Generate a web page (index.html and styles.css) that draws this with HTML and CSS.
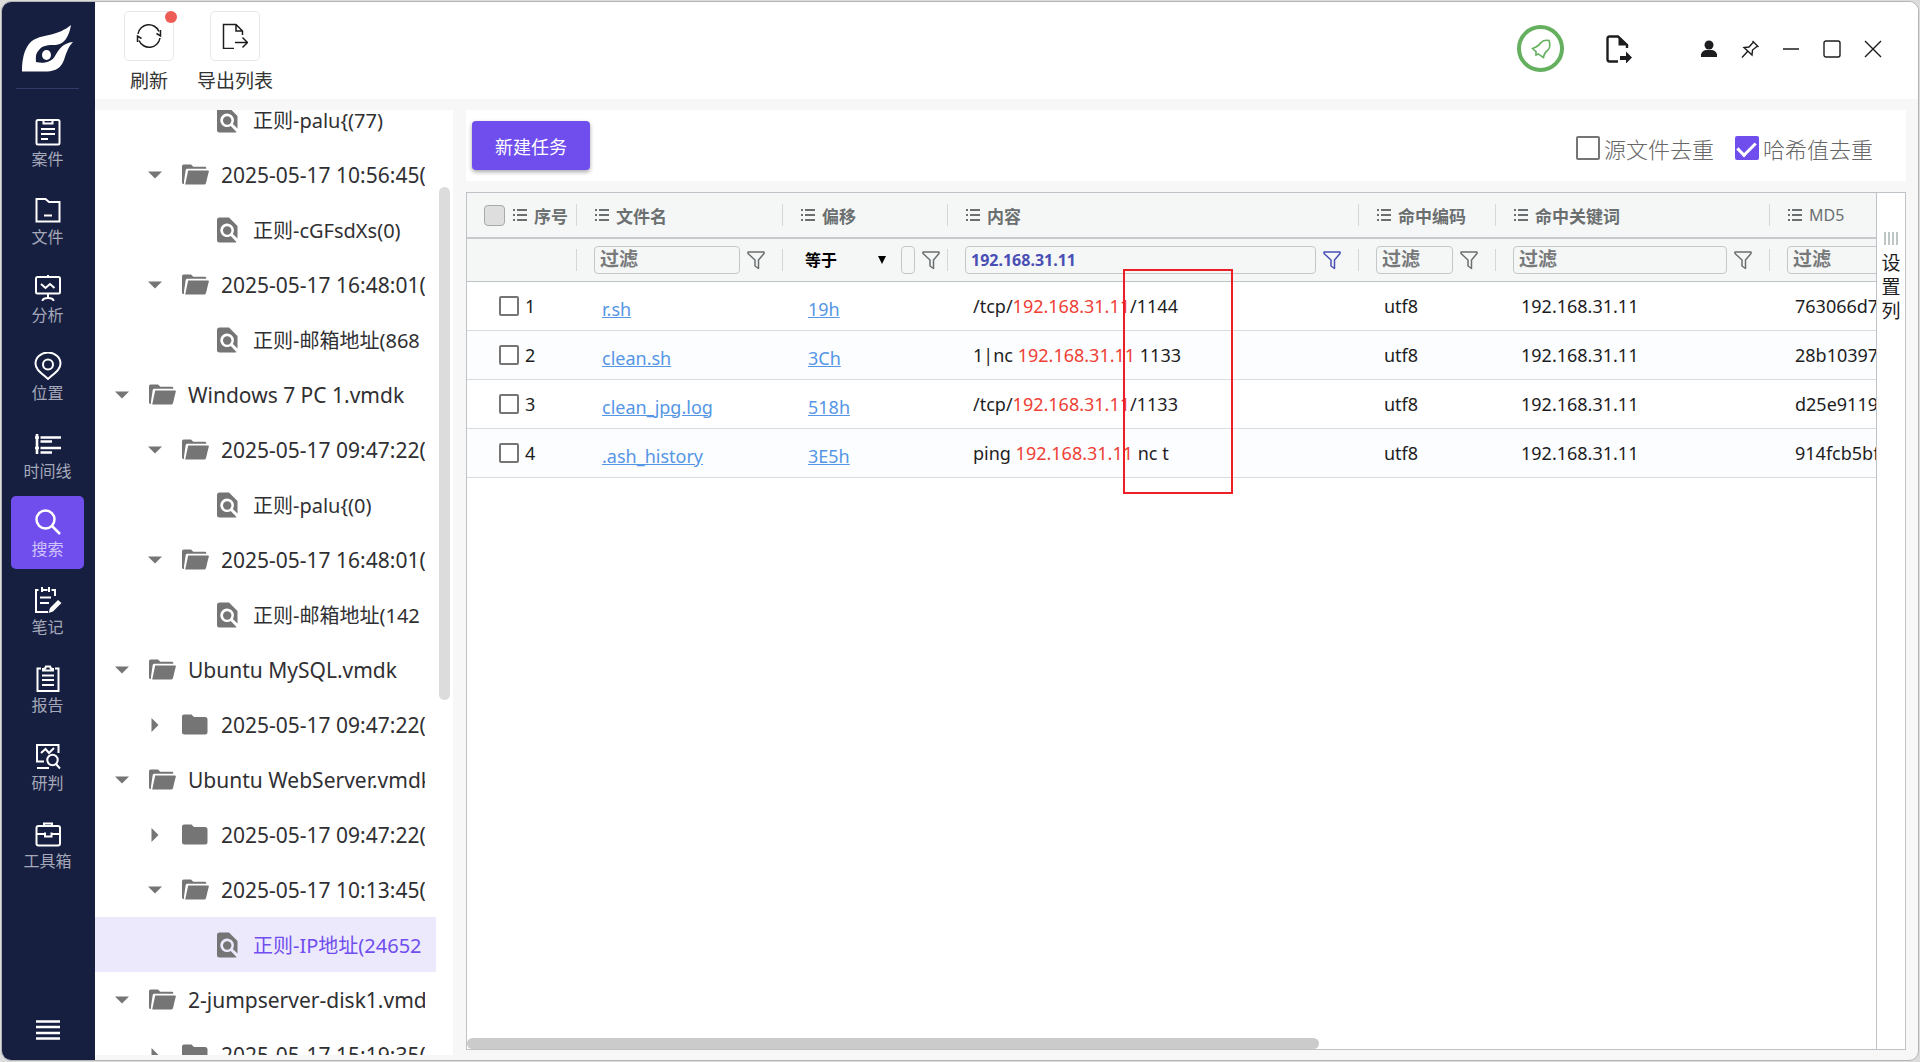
FILE: index.html
```html
<!DOCTYPE html>
<html lang="zh-CN">
<head>
  <meta charset="UTF-8" />
  <title>搜索</title>
  <link rel="stylesheet" href="styles.css">
</head>
<body>

  <!-- iconos compartidos -->
  <svg class="sprite" aria-hidden="true">
    <symbol id="i-open" viewBox="0 0 27 21">
      <path d="M0 2.2Q0 .5 1.7.5H9l2.3 2.3H23q1.3 0 1.3 1.4v.6H5.2Q4 4.800 3.700 6L2 17.500V20Q0 20 0 18.500z"/>
      <path d="M6.200 6.500H26q1 0 .8 1L24 19q-.4 1.500-2 1.500H3.200z"/>
    </symbol>
    <symbol id="i-folder" viewBox="0 0 27 21">
      <path d="M0 2.500Q0 .5 2 .5h7.500L12 3h11q2.500 0 2.500 2.500V18q0 2.500-2.500 2.500H2.500Q0 20.500 0 18z"/>
    </symbol>
    <symbol id="i-find" viewBox="0 0 21 26">
      <path d="M2.500.5H12L20.500 9v12.500l-4.600-4.600a6.800 6.800 0 1 0-2.200 2.200l5.800 5.800q-.6.600-1.500.6H2.500Q0 25.500 0 23V3Q0 .5 2.500.5z"/>
      <circle cx="10.200" cy="13.500" r="4.200"/>
    </symbol>
    <symbol id="i-down" viewBox="0 0 14 14"><path d="M0 3.500h14L7 10.500z"/></symbol>
    <symbol id="i-right" viewBox="0 0 14 14"><path d="M3.500 0v14L10.500 7z"/></symbol>
    <symbol id="i-list" viewBox="0 0 14 12">
      <path d="M0 1h2M4 1h10M0 6h2M4 6h10M0 11h2M4 11h10" stroke="currentColor" stroke-width="1.800"/>
    </symbol>
    <symbol id="i-funnel" viewBox="0 0 18 20">
      <path d="M1 2h16v1.500L11.500 10v8.500L8 16v-6L1 3.500z" fill="none" stroke="currentColor" stroke-width="1.500" stroke-linejoin="round"/>
    </symbol>
  </svg>

  <div class="window">
    <nav class="sidebar">
      <svg class="logo" viewBox="0 0 52 47">
        <path fill="#fff" fill-rule="evenodd" d="M49 0C47 12 42 19 34 20C26 20 21 20 17 25C13 29 14 33 14 37C22 39 30 37 33 31C37 24 41 18 51 17C46 22 44 29 42 35C39 43 34 46 25 46.500H0C0 38 1 29 5 22C10 13 18 12 27 10C36 8 43 5 49 0z"/>
        <ellipse fill="#fff" cx="24.500" cy="30" rx="4.500" ry="5"/>
      </svg>
      <ul class="menu">
        <li><a href="#">
          <svg viewBox="0 0 28 28"><rect x="2.500" y="2" width="23" height="24.500" rx="1.500"/><path d="M9.500 2v3.500h9V2M7 11h14M7 16h14M7 21h7"/></svg>案件</a></li>
        <li><a href="#">
          <svg viewBox="0 0 28 28"><path d="M2.500 3h9l3.500 3h10.500v19.500h-23zM10 19.500h8"/></svg>文件</a></li>
        <li><a href="#">
          <svg viewBox="0 0 28 28"><rect x="2" y="3" width="24" height="16.500" rx="1.500"/><path d="M14 1v2M7 10l4.500 4 4.500-4 4.500 4M14 20v4M8.500 27q0-3 5.500-3t5.500 3"/></svg>分析</a></li>
        <li><a href="#">
          <svg viewBox="0 0 28 28"><path d="M14 27C6 20 1.500 17 1.500 11.500a12.500 11 0 0 1 25 0C26.500 17 22 20 14 27z"/><circle cx="14" cy="12.500" r="5"/></svg>位置</a></li>
        <li><a href="#">
          <svg viewBox="0 0 28 28"><path d="M3 4v20M1 7.500h4M1 18h4M6.500 7.500H27M6.500 11.500H18M6.500 18H27M6.500 22.500H18" stroke-width="2.600"/></svg>时间线</a></li>
        <li><a href="#" class="active">
          <svg viewBox="0 0 28 28"><circle cx="11.500" cy="11.500" r="9" stroke-width="2.500"/><path d="M18 18l8 8" stroke-width="2.500"/></svg>搜索</a></li>
        <li><a href="#">
          <svg viewBox="0 0 28 28"><path d="M4.500 4H2v22h12M17.500 4H21v6M8 1v5M15 1v5M8.500 4h5M6 11.500h11M6 17h9"/><path d="M14.500 27l1.500-5 8-8 3.500 3-8.500 8.500z" fill="#fff" stroke="none"/></svg>笔记</a></li>
        <li><a href="#">
          <svg viewBox="0 0 28 28"><path d="M7 4.500H3.500V27h21V4.500H21M9 6.500h10V5q-2.500 0-3-2.500h-4Q11.500 5 9 5zM8 11.500h12M8 16h12M8 21h12"/></svg>报告</a></li>
        <li><a href="#">
          <svg viewBox="0 0 28 28"><path d="M10 19.500H3V3h21.500v8M3 26h12M7 11l4.500-4 3.500 4 5-5"/><circle cx="18.500" cy="18" r="5.200"/><path d="M22 22l4 4.500"/></svg>研判</a></li>
        <li><a href="#">
          <svg viewBox="0 0 28 28"><rect x="2.500" y="6" width="23.500" height="19.500" rx="2"/><path d="M10 6V3.500h8V6M2.500 14H11M17.500 14H26M11 12.500v4h6.500v-4"/></svg>工具箱</a></li>
      </ul>
      <button class="collapse" aria-label="菜单"><svg viewBox="0 0 24 20"><path d="M0 1.500h24M0 7h24M0 13h24M0 18.500h24"/></svg></button>
    </nav>

    <div class="main">
      <header class="topbar">
        <button class="tool">
          <span class="tool-icon">
            <svg viewBox="0 0 26 26"><path d="M2 11A11 11 0 0 1 23 8.500M24 15A11 11 0 0 1 3 17.500M24.500 7v6l-4-2.500M1.500 19v-6l4 2.500"/></svg>
            <i class="dot"></i>
          </span>刷新
        </button>
        <button class="tool">
          <span class="tool-icon">
            <svg viewBox="0 0 26 26"><path d="M12 25.500H1.500V1.500H14L20.500 8v4M14 1.500V8h6.500M13 19.500h12M20.500 14.500l5 5-5 5"/></svg>
          </span>导出列表
        </button>

        <div class="window-tools">
          <button class="bell" aria-label="通知"><svg viewBox="0 0 20 20"><path d="M1.500 9.500Q8 7 10 3.500Q13 .5 18 1.500Q20 8 17 11Q13 14 12.500 18.500Q10 17 7.500 15L5 16V12.500Q3.500 11.500 1.500 9.500z"/></svg></button>
          <button class="exit" aria-label="导出"><svg viewBox="0 0 26 28"><path d="M12 26.500H3.500q-2 0-2-2v-21q0-2 2-2H12L21 10v3" fill="none" stroke="#1d1d1f" stroke-width="2.400"/><path d="M12.500 1l10 9.500h-10zM14 21h6v-4.500l6 6-6 6V25h-6z"/></svg></button>
          <button aria-label="用户"><svg viewBox="0 0 18 18"><circle cx="9" cy="5" r="4.500"/><path d="M1 17v-2.500q1-4 5-4.500h6q4 .5 5 4.500V17z"/></svg></button>
          <button aria-label="置顶"><svg class="line" viewBox="0 0 18 18"><path d="M11.500 1l6 6M12.500 2L8 7 3 7.500l8 7.500.5-5L16.500 6M7 11l-6 6.500"/></svg></button>
          <button aria-label="最小化"><svg class="line" viewBox="0 0 18 18"><path d="M1 9h16"/></svg></button>
          <button aria-label="最大化"><svg class="line" viewBox="0 0 18 18"><rect x="1" y="1" width="16" height="16" rx="2"/></svg></button>
          <button aria-label="关闭"><svg class="line" viewBox="0 0 18 18"><path d="M1 1l16 16M17 1L1 17"/></svg></button>
        </div>
      </header>

      <div class="content">
        <aside class="tree-panel">
          <ul class="tree">
            <li class="leaf"><svg class="node"><use href="#i-find"/></svg><span>正则-palu{(77)</span></li>
            <li class="sub"><svg class="arrow"><use href="#i-down"/></svg><svg class="node"><use href="#i-open"/></svg><span>2025-05-17 10:56:45(</span></li>
            <li class="leaf"><svg class="node"><use href="#i-find"/></svg><span>正则-cGFsdXs(0)</span></li>
            <li class="sub"><svg class="arrow"><use href="#i-down"/></svg><svg class="node"><use href="#i-open"/></svg><span>2025-05-17 16:48:01(</span></li>
            <li class="leaf"><svg class="node"><use href="#i-find"/></svg><span>正则-邮箱地址(868</span></li>
            <li><svg class="arrow"><use href="#i-down"/></svg><svg class="node"><use href="#i-open"/></svg><span>Windows 7 PC 1.vmdk</span></li>
            <li class="sub"><svg class="arrow"><use href="#i-down"/></svg><svg class="node"><use href="#i-open"/></svg><span>2025-05-17 09:47:22(</span></li>
            <li class="leaf"><svg class="node"><use href="#i-find"/></svg><span>正则-palu{(0)</span></li>
            <li class="sub"><svg class="arrow"><use href="#i-down"/></svg><svg class="node"><use href="#i-open"/></svg><span>2025-05-17 16:48:01(</span></li>
            <li class="leaf"><svg class="node"><use href="#i-find"/></svg><span>正则-邮箱地址(142</span></li>
            <li><svg class="arrow"><use href="#i-down"/></svg><svg class="node"><use href="#i-open"/></svg><span>Ubuntu MySQL.vmdk</span></li>
            <li class="sub"><svg class="arrow"><use href="#i-right"/></svg><svg class="node"><use href="#i-folder"/></svg><span>2025-05-17 09:47:22(</span></li>
            <li><svg class="arrow"><use href="#i-down"/></svg><svg class="node"><use href="#i-open"/></svg><span>Ubuntu WebServer.vmdk</span></li>
            <li class="sub"><svg class="arrow"><use href="#i-right"/></svg><svg class="node"><use href="#i-folder"/></svg><span>2025-05-17 09:47:22(</span></li>
            <li class="sub"><svg class="arrow"><use href="#i-down"/></svg><svg class="node"><use href="#i-open"/></svg><span>2025-05-17 10:13:45(</span></li>
            <li class="leaf selected"><svg class="node"><use href="#i-find"/></svg><span>正则-IP地址(24652</span></li>
            <li><svg class="arrow"><use href="#i-down"/></svg><svg class="node"><use href="#i-open"/></svg><span>2-jumpserver-disk1.vmd</span></li>
            <li class="sub"><svg class="arrow"><use href="#i-right"/></svg><svg class="node"><use href="#i-folder"/></svg><span>2025-05-17 15:19:35(</span></li>
          </ul>
          <div class="scroll-y"></div>
        </aside>

        <section class="results">
          <div class="actions">
            <button class="primary">新建任务</button>
            <div class="options">
              <label><input type="checkbox">源文件去重</label>
              <label><input type="checkbox" checked>哈希值去重</label>
            </div>
          </div>

          <div class="grid">
            <div class="grid-body">
              <table>
                <colgroup>
                  <col class="c-num"><col class="c-name"><col class="c-offset"><col class="c-content"><col class="c-enc"><col class="c-key"><col class="c-md5">
                </colgroup>
                <thead>
                  <tr class="titles">
                    <th><div class="cell"><input type="checkbox" class="all" aria-label="全选"><svg class="list"><use href="#i-list"/></svg>序号</div></th>
                    <th><div class="cell"><svg class="list"><use href="#i-list"/></svg>文件名</div></th>
                    <th><div class="cell"><svg class="list"><use href="#i-list"/></svg>偏移</div></th>
                    <th><div class="cell"><svg class="list"><use href="#i-list"/></svg>内容</div></th>
                    <th><div class="cell"><svg class="list"><use href="#i-list"/></svg>命中编码</div></th>
                    <th><div class="cell"><svg class="list"><use href="#i-list"/></svg>命中关键词</div></th>
                    <th><div class="cell md5"><svg class="list"><use href="#i-list"/></svg>MD5</div></th>
                  </tr>
                  <tr class="filters">
                    <td><div class="cell"></div></td>
                    <td><div class="cell"><input type="text" placeholder="过滤" aria-label="文件名"><svg class="funnel"><use href="#i-funnel"/></svg></div></td>
                    <td><div class="cell narrow"><span class="operator"><select aria-label="偏移条件"><option>等于</option></select><i></i></span><input type="text" class="tiny" aria-label="偏移"><svg class="funnel"><use href="#i-funnel"/></svg></div></td>
                    <td><div class="cell on"><input type="text" value="192.168.31.11" aria-label="内容"><svg class="funnel"><use href="#i-funnel"/></svg></div></td>
                    <td><div class="cell"><input type="text" placeholder="过滤" aria-label="命中编码"><svg class="funnel"><use href="#i-funnel"/></svg></div></td>
                    <td><div class="cell"><input type="text" placeholder="过滤" aria-label="命中关键词"><svg class="funnel"><use href="#i-funnel"/></svg></div></td>
                    <td><div class="cell"><input type="text" placeholder="过滤" aria-label="MD5"><svg class="funnel"><use href="#i-funnel"/></svg></div></td>
                  </tr>
                </thead>
                <tbody>
                  <tr>
                    <td><label class="pick"><input type="checkbox">1</label></td>
                    <td><a href="#">r.sh</a></td>
                    <td><a href="#">19h</a></td>
                    <td>/tcp/<em>192.168.31.11</em>/1144</td>
                    <td>utf8</td>
                    <td>192.168.31.11</td>
                    <td>763066d7</td>
                  </tr>
                  <tr>
                    <td><label class="pick"><input type="checkbox">2</label></td>
                    <td><a href="#">clean.sh</a></td>
                    <td><a href="#">3Ch</a></td>
                    <td>1|nc <em>192.168.31.11</em> 1133</td>
                    <td>utf8</td>
                    <td>192.168.31.11</td>
                    <td>28b10397</td>
                  </tr>
                  <tr>
                    <td><label class="pick"><input type="checkbox">3</label></td>
                    <td><a href="#">clean_jpg.log</a></td>
                    <td><a href="#">518h</a></td>
                    <td>/tcp/<em>192.168.31.11</em>/1133</td>
                    <td>utf8</td>
                    <td>192.168.31.11</td>
                    <td>d25e9119</td>
                  </tr>
                  <tr>
                    <td><label class="pick"><input type="checkbox">4</label></td>
                    <td><a href="#">.ash_history</a></td>
                    <td><a href="#">3E5h</a></td>
                    <td>ping <em>192.168.31.11</em> nc t</td>
                    <td>utf8</td>
                    <td>192.168.31.11</td>
                    <td>914fcb5bf</td>
                  </tr>
                </tbody>
              </table>
              <div class="scroll-x"></div>
            </div>
            <button class="columns"><svg viewBox="0 0 14 13"><path d="M1 0v13M5 0v13M9 0v13M13 0v13"/></svg><span>设置列</span></button>
            <div class="mark"></div>
          </div>
        </section>
      </div>
    </div>
  </div>

</body>
</html>
```
FILE: styles.css
```css
* {
  box-sizing: border-box;
}

body {
  margin: 0;
  padding: 1px;
  height: 100vh;
  background: #dcdcdc;
  font-family: "Noto Sans", "Noto Sans CJK SC", sans-serif;
  font-size: 18px;
  color: #1d1d1f;
  overflow: hidden;
}

button, input, select {
  font-family: inherit;
  margin: 0;
}

button {
  border: none;
  background: none;
  padding: 0;
  color: inherit;
}

ul {
  list-style: none;
  margin: 0;
  padding: 0;
}

svg {
  display: block;
  flex: none;
}

.sprite {
  position: absolute;
  width: 0;
  height: 0;
}

.window {
  display: flex;
  height: 100%;
  border: 1px solid #b4b4b6;
  border-radius: 10px;
  background: #f7f7f7;
  overflow: hidden;
}

/* barra lateral */
.sidebar {
  width: 93px;
  flex: none;
  display: flex;
  flex-direction: column;
  align-items: center;
  padding: 23px 11px 20px 9px;
  background: #171f41;
}

.logo {
  width: 52px;
  height: 47px;
}

.menu {
  width: 100%;
  display: flex;
  flex-direction: column;
  align-items: center;
  gap: 5px;
  margin-top: 16px;
  padding-top: 18px;
  position: relative;
}

.menu::before {
  content: "";
  position: absolute;
  top: 0;
  left: 5px;
  right: 5px;
  height: 1px;
  background: #333a68;
}

.menu a {
  width: 73px;
  height: 73px;
  display: flex;
  flex-direction: column;
  align-items: center;
  justify-content: center;
  gap: 1px;
  padding-top: 3px;
  border-radius: 5px;
  font-size: 16px;
  line-height: 24px;
  color: #a4a8b8;
  text-decoration: none;
}

.menu a.active {
  background: #704eee;
  color: #d0c5fa;
}

.menu svg {
  width: 28px;
  height: 28px;
  fill: none;
  stroke: #fff;
  stroke-width: 2;
}

.collapse {
  margin-top: auto;
}

.collapse svg {
  width: 24px;
  height: 20px;
  stroke: #fff;
  stroke-width: 2.5;
}

.main {
  flex: 1;
  min-width: 0;
  display: flex;
  flex-direction: column;
}

/* barra superior */
.topbar {
  display: flex;
  align-items: flex-start;
  height: 97px;
  flex: none;
  padding: 9px 33px 0 11px;
  background: #fff;
}

.tool {
  width: 86px;
  display: flex;
  flex-direction: column;
  align-items: center;
  gap: 5px;
  font-size: 19px;
  line-height: 30px;
  color: #333;
  white-space: nowrap;
}

.tool-icon {
  position: relative;
  width: 50px;
  height: 50px;
  display: flex;
  align-items: center;
  justify-content: center;
  border: 1px solid #e6e6e6;
  border-radius: 5px;
}

.tool-icon svg {
  width: 26px;
  height: 26px;
  fill: none;
  stroke: #1d1d1f;
  stroke-width: 1.5;
}

.dot {
  position: absolute;
  top: -1px;
  right: -4px;
  width: 12px;
  height: 12px;
  border-radius: 50%;
  background: #ee5c56;
}

.window-tools {
  margin-left: auto;
  display: flex;
  align-items: center;
  gap: 17px;
  height: 75px;
}

.window-tools button {
  width: 24px;
  height: 24px;
  display: flex;
  align-items: center;
  justify-content: center;
}

.window-tools svg {
  width: 18px;
  height: 18px;
  fill: #1d1d1f;
}

.window-tools .line {
  fill: none;
  stroke: #1d1d1f;
  stroke-width: 1.4;
}

.window-tools .bell {
  width: 47px;
  height: 47px;
  margin-right: 25px;
  border: 4px solid #65b05f;
  border-radius: 50%;
}

.window-tools .bell svg {
  width: 20px;
  height: 20px;
  fill: none;
  stroke: #65b05f;
  stroke-width: 1.6;
}

.window-tools .exit {
  width: 26px;
  margin-right: 48px;
}

.window-tools .exit svg {
  width: 26px;
  height: 28px;
}

.content {
  flex: 1;
  min-height: 0;
  display: flex;
  gap: 13px;
  padding: 11px 12px 5px 0;
}

/* arbol */
.tree-panel {
  position: relative;
  width: 358px;
  flex: none;
  background: #fff;
  overflow: hidden;
}

.tree {
  margin: -18px 17px 0 0;
}

.tree li {
  display: flex;
  align-items: center;
  height: 55px;
  padding: 0 11px 0 20px;
  font-size: 21px;
  color: #303033;
}

.tree li.sub {
  padding-left: 53px;
}

.tree li.leaf {
  padding-left: 119px;
  font-size: 20px;
}

.tree li.selected {
  background: #ece9fd;
  color: #704eee;
}

.tree span {
  flex: 1;
  min-width: 0;
  white-space: nowrap;
  overflow: hidden;
}

.arrow {
  width: 14px;
  height: 14px;
  margin-right: 20px;
  fill: #757575;
}

.node {
  width: 27px;
  height: 21px;
  margin-right: 12px;
  fill: #757575;
}

.leaf .node {
  height: 26px;
}

.scroll-y {
  position: absolute;
  top: 77px;
  right: 3px;
  width: 11px;
  height: 513px;
  border-radius: 6px;
  background: #dcdcdc;
}

/* resultados */
.results {
  flex: 1;
  min-width: 0;
  display: flex;
  flex-direction: column;
  gap: 11px;
  padding-bottom: 5px;
}

.actions {
  display: flex;
  justify-content: space-between;
  align-items: center;
  height: 71px;
  flex: none;
  padding: 0 33px 0 6px;
  background: #fff;
}

.primary {
  width: 118px;
  height: 49px;
  border-radius: 4px;
  background: #704eee;
  color: #fff;
  font-size: 18px;
  box-shadow: 0 2px 4px rgba(0,0,0,0.35);
}

.options {
  display: flex;
  gap: 21px;
  padding-top: 4px;
}

.options label {
  display: flex;
  align-items: center;
  gap: 4px;
  font-size: 22px;
  font-weight: 300;
  color: #666;
}

input[type="checkbox"] {
  appearance: none;
  width: 20px;
  height: 20px;
  flex: none;
  border: 2px solid #757575;
  border-radius: 2px;
  background: #fff;
}

.options input[type="checkbox"] {
  width: 24px;
  height: 24px;
}

.options input[type="checkbox"]:checked {
  border-color: #704eee;
  background: #704eee;
  display: flex;
  justify-content: center;
}

.options input:checked::after {
  content: "";
  width: 8px;
  height: 15px;
  border: solid #fff;
  border-width: 0 3px 3px 0;
  transform: rotate(45deg);
}

.grid {
  position: relative;
  flex: 1;
  min-height: 0;
  display: flex;
  border: 1px solid #bdc3c7;
  background: #fff;
}

.grid-body {
  flex: 1;
  min-width: 0;
  display: flex;
  flex-direction: column;
  justify-content: space-between;
  overflow: hidden;
}

table {
  width: 1577px;
  table-layout: fixed;
  border-collapse: separate;
  border-spacing: 0;
}

.c-num { width: 110px; }
.c-name { width: 206px; }
.c-offset { width: 165px; }
.c-content { width: 411px; }
.c-enc { width: 137px; }
.c-key { width: 274px; }
.c-md5 { width: 274px; }

th, td {
  padding: 0;
  text-align: left;
}

thead th, thead td {
  background: #f5f7f7;
}

.titles th {
  height: 46px;
  border-bottom: 2px solid #c6cacd;
  font-size: 17px;
  font-weight: bold;
  color: #6b6f70;
}

.filters td {
  height: 43px;
  border-bottom: 1px solid #bdc3c7;
}

.cell {
  display: flex;
  align-items: center;
  gap: 7px;
  height: 22px;
  padding: 0 17px 0 18px;
  border-right: 1px solid #d3d7d9;
  white-space: nowrap;
}

.filters .cell {
  padding-left: 17px;
}

.titles th:first-child .cell {
  padding: 0 0 0 17px;
}

.titles .md5 {
  font-size: 16px;
  font-weight: normal;
}

.titles .all {
  width: 21px;
  height: 21px;
  border: 1px solid #a9a9a9;
  border-radius: 4px;
  background: #dedede;
  margin-right: 1px;
}

.list {
  width: 14px;
  height: 12px;
}

.funnel {
  width: 18px;
  height: 20px;
  color: #6b6f70;
}

.filters input {
  flex: 1;
  min-width: 0;
  width: 20px;
  height: 28px;
  padding: 0 5px;
  border: 1px solid #c3c7c9;
  border-radius: 4px;
  background: transparent;
  font-size: 16px;
  font-weight: 700;
  color: #4a4fb5;
}

.filters input::placeholder {
  font-size: 19px;
  font-weight: 700;
  color: #77797a;
}

.filters .on .funnel {
  color: #4a4fb5;
}

.filters .narrow {
  padding-right: 6px;
}

.operator {
  flex: none;
  width: 94px;
  display: flex;
  align-items: center;
  padding-right: 8px;
}

.operator select {
  appearance: none;
  flex: 1;
  padding: 0 0 0 5px;
  border: none;
  background: none;
  font-size: 16px;
  font-weight: bold;
  color: #000;
}

.operator i {
  border: 4px solid transparent;
  border-top: 8px solid #000;
  border-bottom: none;
}

.filters .tiny {
  flex: none;
  width: 14px;
  padding: 0;
}

tbody td {
  height: 49px;
  padding-left: 25px;
  border-bottom: 1px solid #d9dcde;
  white-space: nowrap;
}

tbody tr:nth-child(even) td {
  background: #fcfdfe;
}

tbody td:first-child {
  padding-left: 32px;
}

tbody td:nth-child(2), tbody td:nth-child(3) {
  padding-top: 5px;
}

.pick {
  display: flex;
  align-items: center;
  gap: 6px;
}

td a {
  color: #5596e6;
}

em {
  font-style: normal;
  color: #ee4035;
}

.scroll-x {
  width: 852px;
  height: 11px;
  border-radius: 6px;
  background: #cbcbcb;
}

.columns {
  width: 29px;
  flex: none;
  display: flex;
  flex-direction: column;
  align-items: center;
  gap: 6px;
  padding-top: 39px;
  border-left: 1px solid #bdc3c7;
}

.columns svg {
  width: 14px;
  height: 13px;
  stroke: #7f8c8d;
}

.columns span {
  width: 19px;
  font-size: 19px;
  line-height: 24px;
}

/* recuadro rojo sobre los puertos */
.mark {
  position: absolute;
  top: 76px;
  left: 656px;
  width: 110px;
  height: 225px;
  border: 2px solid #ec1f27;
}
```
